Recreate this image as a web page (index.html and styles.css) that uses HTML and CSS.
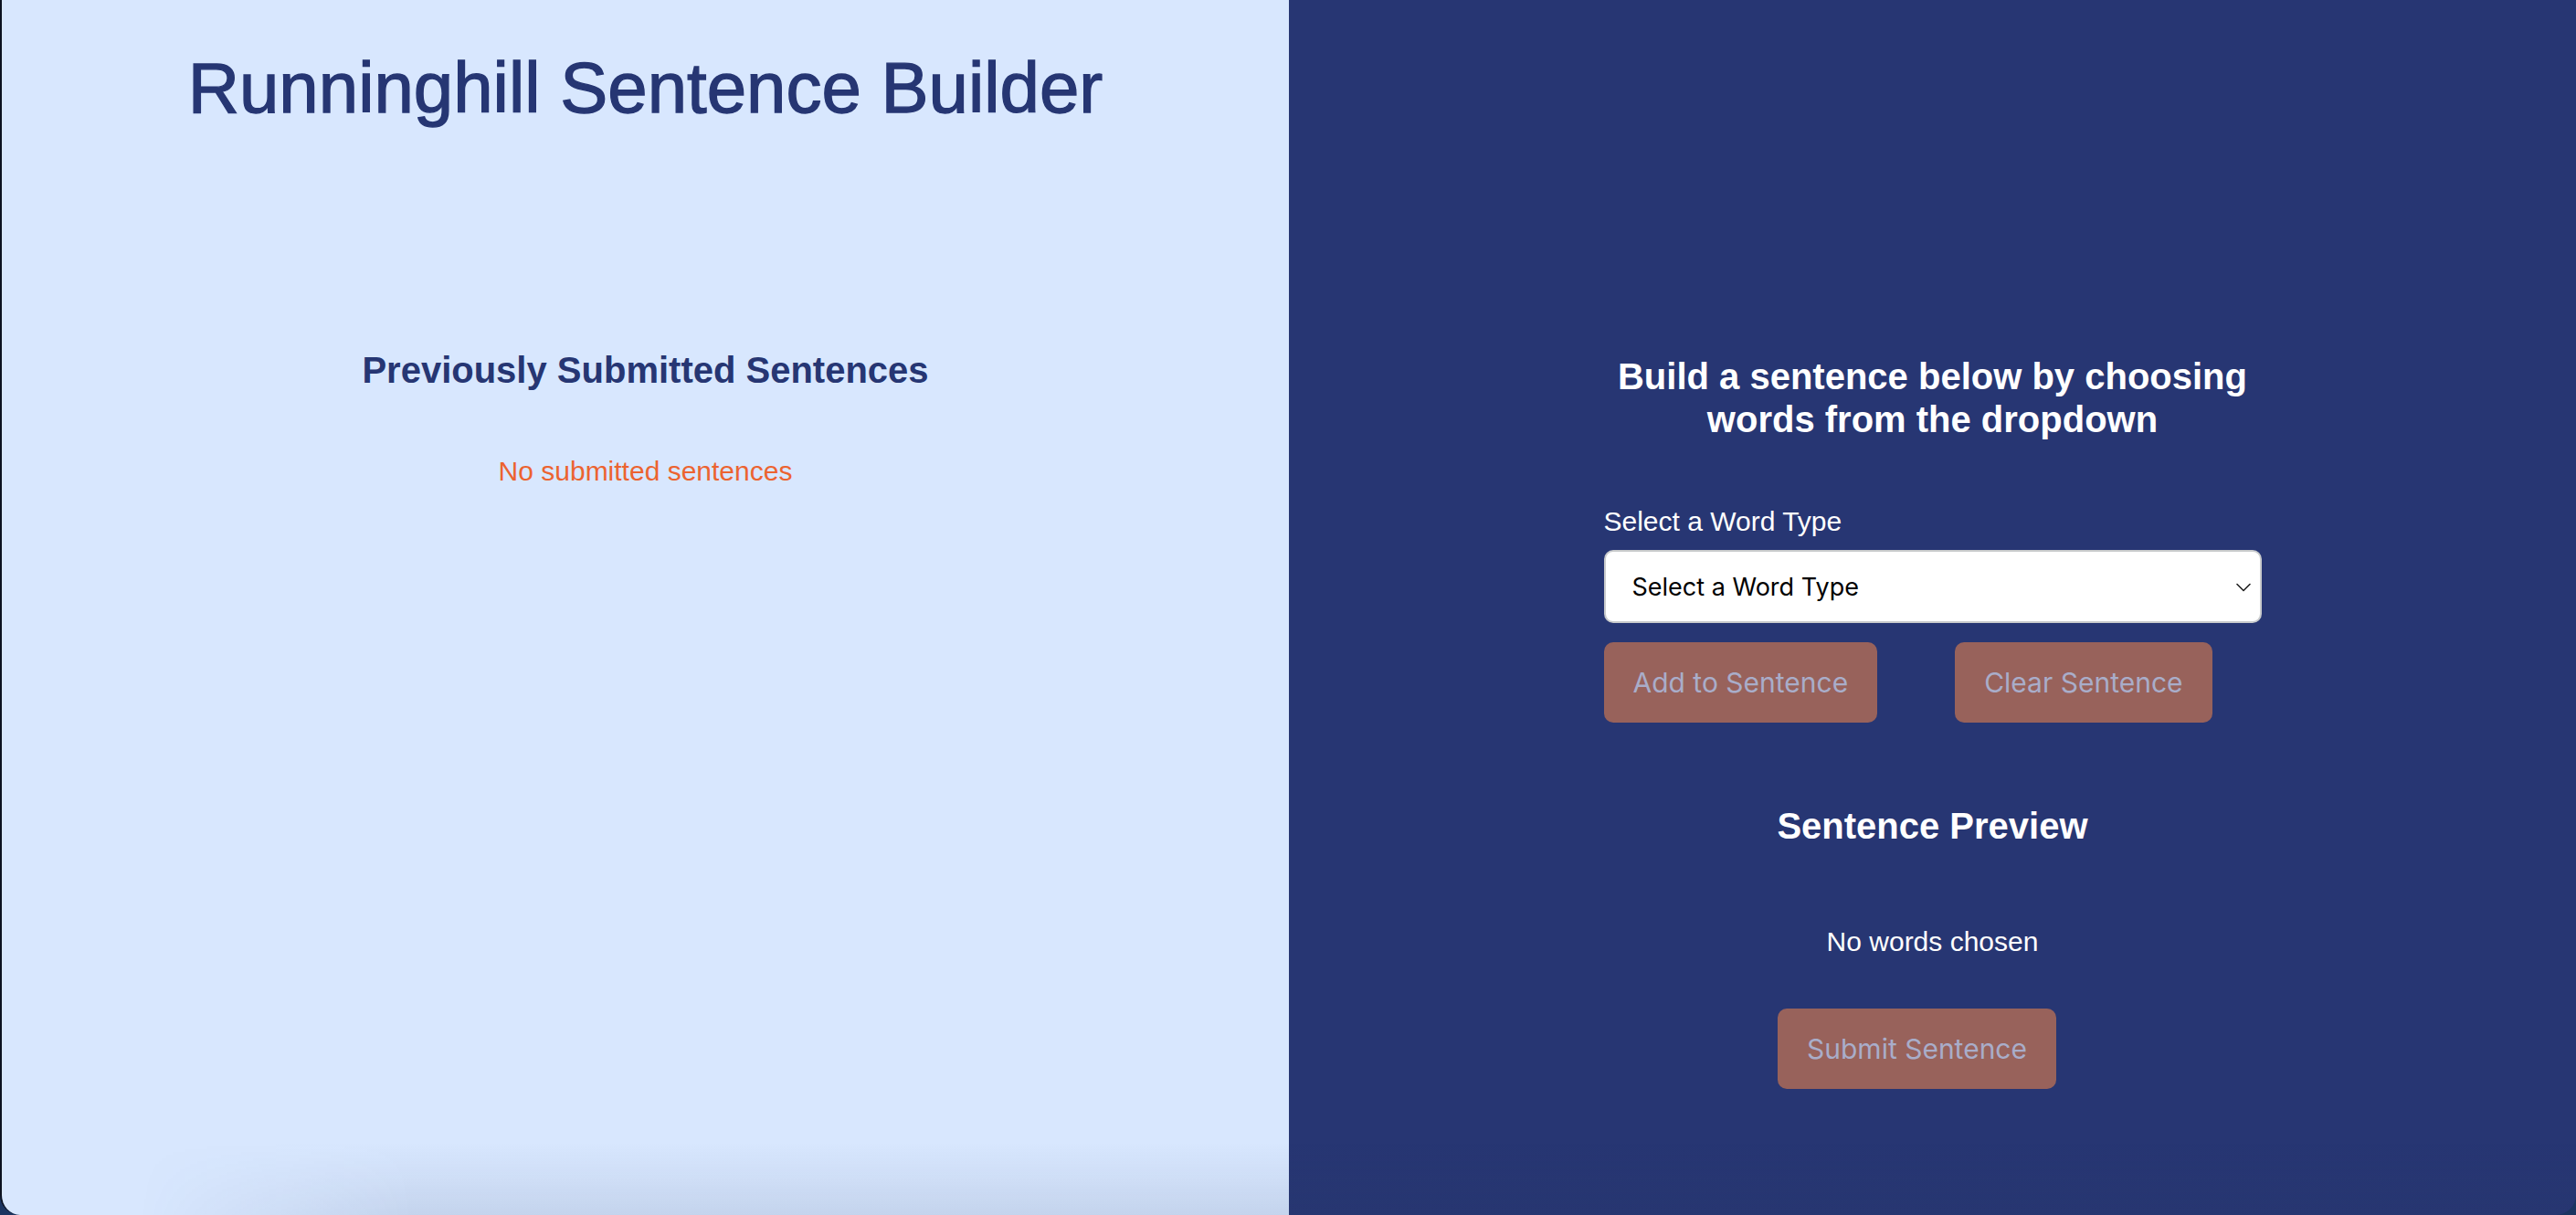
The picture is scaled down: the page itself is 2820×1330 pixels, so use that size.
FILE: index.html
```html
<!DOCTYPE html>
<html lang="en">
<head>
<meta charset="utf-8">
<title>Runninghill Sentence Builder</title>
<link rel="stylesheet" href="styles.css">
</head>
<body>
<div class="window">
  <section class="panel panel-left">
    <h1 class="app-title">Runninghill Sentence Builder</h1>
    <h2 class="section-title">Previously Submitted Sentences</h2>
    <p class="empty-note">No submitted sentences</p>
  </section>
  <section class="panel panel-right">
    <div class="builder">
      <h2 class="builder-title">Build a sentence below by choosing words from the dropdown</h2>
      <label class="field-label" for="wordType">Select a Word Type</label>
      <div class="select-wrap">
        <select id="wordType" class="select">
          <option>Select a Word Type</option>
        </select>
        <svg class="chevron" viewBox="0 0 16 10" width="16" height="10" aria-hidden="true"><path d="M1 1.5 L8 8.5 L15 1.5" fill="none" stroke="#222" stroke-width="1.6" stroke-linecap="round" stroke-linejoin="round"/></svg>
      </div>
      <div class="button-row">
        <button class="btn">Add to Sentence</button>
        <button class="btn">Clear Sentence</button>
      </div>
      <h2 class="preview-title">Sentence Preview</h2>
      <p class="preview-text">No words chosen</p>
      <div class="submit-row">
        <button class="btn btn-submit">Submit Sentence</button>
      </div>
    </div>
  </section>
  <div class="bottom-shade"></div>
</div>
</body>
</html>
```
FILE: styles.css
```css
* { box-sizing: border-box; }
html, body { margin: 0; padding: 0; }
body {
  background: #1b3561;
  width: 2820px;
  height: 1330px;
  overflow: hidden;
  font-family: "Liberation Sans", Arial, sans-serif;
}
.window {
  position: relative;
  width: 2820px;
  height: 1330px;
  display: grid;
  grid-template-columns: 1409px 1409px;
  border-left: 2px solid #0c1220;
  border-radius: 0 0 22px 22px;
  overflow: hidden;
}
.panel { height: 100%; }
.panel-left {
  background: #d8e7fe;
  text-align: center;
  padding-top: 51px;
}
.app-title {
  margin: 0;
  font-size: 78px;
  font-weight: 400;
  line-height: 90px;
  color: #263673;
  -webkit-text-stroke: 1.3px #263673;
}
.section-title {
  margin: 241px 0 0;
  font-size: 40px;
  font-weight: 700;
  line-height: 46px;
  color: #263673;
}
.empty-note {
  margin: 70px 0 0;
  font-size: 30px;
  line-height: 35px;
  color: #ec6330;
}
.panel-right {
  background: #273673;
  display: flex;
  justify-content: center;
  padding-top: 389px;
}
.builder {
  width: 720px;
  display: flex;
  flex-direction: column;
}
.builder-title {
  margin: 0;
  text-align: center;
  font-size: 40px;
  line-height: 47px;
  font-weight: 700;
  color: #ffffff;
}
.field-label {
  margin-top: 70px;
  font-size: 30px;
  line-height: 35px;
  color: #ffffff;
}
.select-wrap {
  position: relative;
  margin-top: 14px;
  height: 80px;
}
.select {
  -webkit-appearance: none;
  appearance: none;
  width: 100%;
  height: 80px;
  border: 2px solid #c9cbcc;
  border-radius: 10px;
  background: #ffffff;
  padding: 0 30px 0 29px;
  font-family: "Inter", "Liberation Sans", sans-serif;
  font-size: 27px;
  color: #000000;
}
.chevron {
  position: absolute;
  right: 12px;
  top: 36px;
}
.button-row {
  display: flex;
  gap: 85px;
  margin-top: 21px;
}
.btn {
  height: 88px;
  padding: 0 32px;
  border: none;
  border-radius: 10px;
  background: #98625b;
  color: #a9adc9;
  font-family: "Inter", "Liberation Sans", sans-serif;
  font-size: 30px;
}
.preview-title {
  margin: 90px 0 0;
  text-align: center;
  font-size: 40px;
  line-height: 46px;
  font-weight: 700;
  color: #ffffff;
}
.preview-text {
  margin: 86px 0 0;
  text-align: center;
  font-size: 30px;
  line-height: 35px;
  color: #ffffff;
}
.submit-row {
  display: flex;
  justify-content: center;
  margin-top: 56px;
  padding-right: 34px;
}
.bottom-shade {
  position: absolute;
  left: 150px;
  right: 0;
  bottom: 0;
  height: 80px;
  pointer-events: none;
  background: linear-gradient(to bottom, rgba(40, 60, 100, 0) 0%, rgba(40, 60, 100, 0.04) 40%, rgba(40, 60, 100, 0.11) 100%);
  -webkit-mask-image: linear-gradient(to right, transparent 0, #000 300px);
  mask-image: linear-gradient(to right, transparent 0, #000 300px);
}
```
